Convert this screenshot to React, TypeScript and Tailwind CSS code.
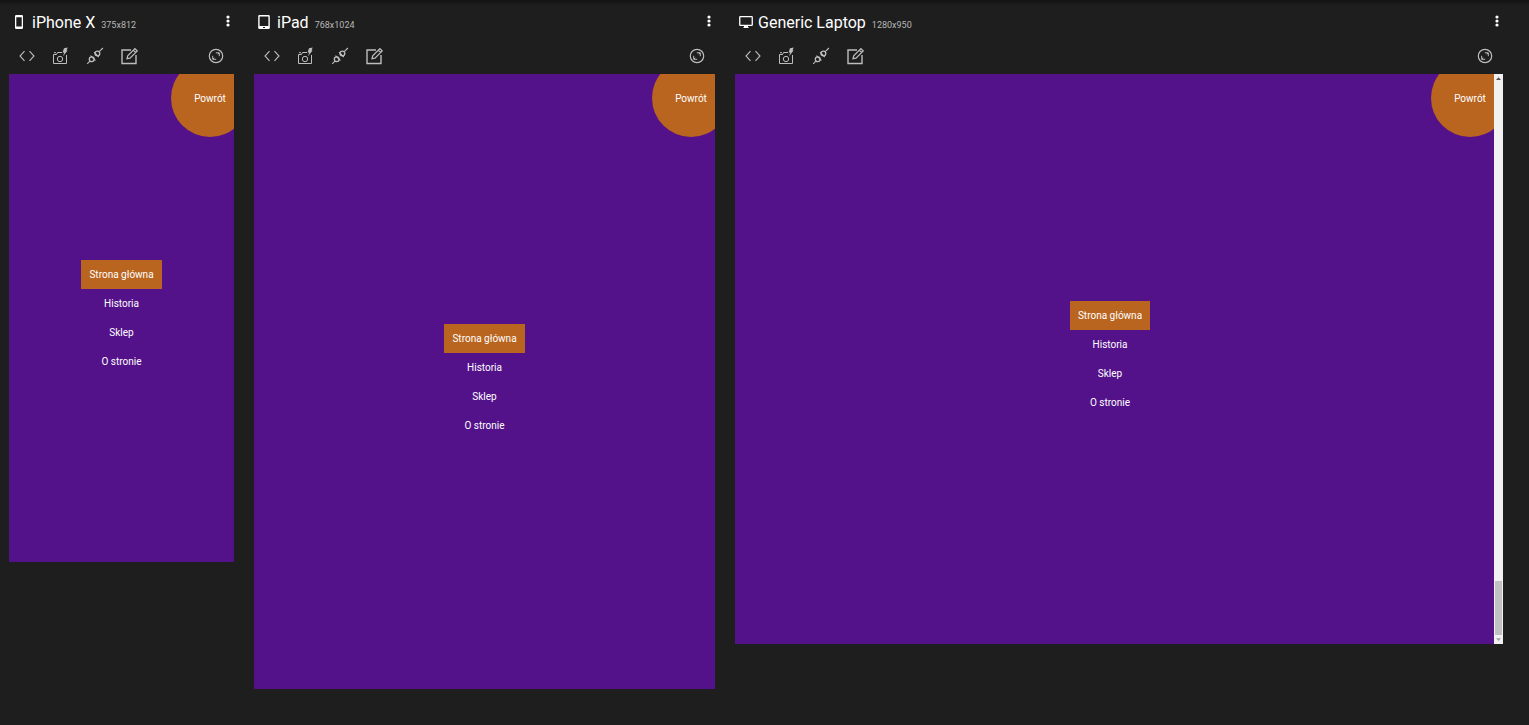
import type { ReactNode } from "react";

type Kind = "phone" | "tablet" | "desktop";

interface Device {
  name: string;
  size: string;
  kind: Kind;
  panel: string;
  screen: string;
  scrollbar?: boolean;
}

const devices: Device[] = [
  { name: "iPhone X", size: "375x812", kind: "phone", panel: "w-[225px]", screen: "aspect-[225/488]" },
  { name: "iPad", size: "768x1024", kind: "tablet", panel: "w-[461px]", screen: "aspect-[461/615]" },
  { name: "Generic Laptop", size: "1280x950", kind: "desktop", panel: "w-[768px]", screen: "aspect-[768/570]", scrollbar: true },
];

const links = ["Strona główna", "Historia", "Sklep", "O stronie"];

function DeviceIcon({ kind }: { kind: Kind }) {
  if (kind === "phone") {
    return (
      <svg className="h-4 w-3" viewBox="0 0 12 16" fill="currentColor" fillRule="evenodd" aria-hidden="true">
        <path d="M3.200 1h5.600q1.200 0 1.200 1.200v11.600q0 1.200-1.200 1.200H3.200Q2 15 2 13.800V2.200Q2 1 3.200 1zM3.300 3.300v9.200h5.400V3.300z" />
      </svg>
    );
  }
  if (kind === "tablet") {
    return (
      <svg className="h-4 w-3" viewBox="0 0 12 16" fill="currentColor" fillRule="evenodd" aria-hidden="true">
        <path d="M1.500 1h9q1.300 0 1.300 1.300v11.400q0 1.300-1.300 1.300h-9Q.2 15 .2 13.700V2.300Q.2 1 1.500 1zM1.600 2.600v9.400h8.800V2.600zM5 13h2v1H5z" />
      </svg>
    );
  }
  return (
    <svg className="h-4 w-3.5" viewBox="0 0 14 16" fill="currentColor" fillRule="evenodd" aria-hidden="true">
      <path d="M1.300 2h11.400q1.200 0 1.200 1.200v7.600q0 1.200-1.200 1.200H9v1l1 1H4l1-1v-1H1.300Q.1 12 .1 10.800V3.200Q.1 2 1.300 2zM1.400 3.300v7.400h11.200V3.300z" />
    </svg>
  );
}

function ToolButton({ label, children }: { label: string; children: ReactNode }) {
  return (
    <button type="button" aria-label={label} className="flex h-6 w-[34px] items-center justify-center text-[#bdbdbd]">
      <svg className="size-[18px]" viewBox="0 0 18 18" fill="none" stroke="currentColor" strokeWidth="1" aria-hidden="true">
        {children}
      </svg>
    </button>
  );
}

function Toolbar() {
  return (
    <div className="flex items-center px-px">
      <ToolButton label="Inspect">
        <path d="M6.500 4.200 2 9l4.500 4.800M11.500 4.200 16 9l-4.500 4.800" strokeWidth="1.100" />
      </ToolButton>
      <ToolButton label="Screenshot">
        <path d="M10 5.500H5.500L4.500 7.500H1.500V16.500H14.500V8" />
        <path d="M2 5.700H4" />
        <circle cx="8" cy="12" r="2.700" />
        <path d="M12 1.200 15.700 .4 14.500 3.600H15.600L11 9.200 12.200 5.500H10.600z" fill="currentColor" stroke="none" />
      </ToolButton>
      <ToolButton label="Connect">
        <circle cx="5.700" cy="12.300" r="2.400" strokeWidth="1.300" />
        <circle cx="11.400" cy="6.500" r="2.400" strokeWidth="1.300" />
        <path d="M1.200 16.800 3.900 14.100M13.200 4.700 16.900 1M4.500 8.600 9.400 13.500M8 5.200 12.800 10" strokeWidth="1.100" />
      </ToolButton>
      <ToolButton label="Edit">
        <path d="M11 3H2V16.500H16V8" strokeWidth="1.400" />
        <path d="M7 11.700 7.700 8.800 14.900 1.600 17.200 3.900 10 11.100zM13.300 3.200 15.600 5.500" strokeWidth="1.200" />
      </ToolButton>
      <div className="ml-auto">
        <ToolButton label="Fullscreen">
          <circle cx="9" cy="9" r="6.700" strokeWidth="1.200" />
          <path d="M8.800 5.800H12.300V9.200M5.700 8.800V12.300H9.200M12 6 10.800 7.200M6 12 7.200 10.800" />
        </ToolButton>
      </div>
    </div>
  );
}

function Scrollbar() {
  return (
    <div className="flex w-[9px] shrink-0 flex-col items-center bg-[#f1f1f1]" aria-hidden="true">
      <svg className="h-[9px] w-[9px]" viewBox="0 0 9 9" fill="#505050">
        <path d="M2 6 4.500 3.200 7 6z" />
      </svg>
      <div className="grow" />
      <div className="h-[54px] w-[7px] bg-[#c1c1c1]" />
      <svg className="h-[9px] w-[9px]" viewBox="0 0 9 9" fill="#a3a3a3">
        <path d="M2 3.200h5L4.500 6z" />
      </svg>
    </div>
  );
}

function Screen({ device }: { device: Device }) {
  return (
    <div className={`flex w-full ${device.screen}`}>
      <div className={`relative flex grow items-center justify-center overflow-hidden bg-[#54128a] text-[10px] text-white ${device.scrollbar ? "pr-[9px]" : ""}`}>
        <button type="button" className="absolute -top-[15px] -right-[15px] size-[78px] rounded-full bg-[#b9651f]">
          Powrót
        </button>
        <nav className="flex flex-col items-center">
          {links.map((link, i) => (
            <a key={link} href="#" className={`flex h-[29px] items-center px-2 ${i === 0 ? "bg-[#b9651f]" : ""}`}>
              {link}
            </a>
          ))}
        </nav>
      </div>
      {device.scrollbar && <Scrollbar />}
    </div>
  );
}

function DevicePanel({ device }: { device: Device }) {
  return (
    <section className={`shrink-0 ${device.panel}`}>
      <header className="flex h-6 items-center pl-1">
        <span className="w-[19px] shrink-0 pb-0.5 text-white">
          <DeviceIcon kind={device.kind} />
        </span>
        <div className="flex items-baseline gap-1.5 whitespace-nowrap">
          <h2 className="text-base leading-6 text-white">{device.name}</h2>
          <span className="text-[9px] text-[#b8b8b8]">{device.size}</span>
        </div>
        <button type="button" aria-label={`${device.name} menu`} className="ml-auto flex w-3 justify-center pb-1 text-white">
          <svg className="h-3 w-1" viewBox="0 0 4 12" fill="currentColor" aria-hidden="true">
            <circle cx="2" cy="2" r="1.600" />
            <circle cx="2" cy="6" r="1.600" />
            <circle cx="2" cy="10" r="1.600" />
          </svg>
        </button>
      </header>
      <div className="pt-[9px] pb-1.5">
        <Toolbar />
      </div>
      <Screen device={device} />
    </section>
  );
}

export default function App() {
  return (
    <main className="min-h-screen overflow-x-auto bg-[#1e1e1e] font-['Roboto',sans-serif]">
      <div className="h-1.5 bg-linear-to-b from-[#131313] to-[#1e1e1e]" />
      <div className="flex items-start gap-5 px-[9px] pt-[5px]">
        {devices.map((device) => (
          <DevicePanel key={device.name} device={device} />
        ))}
      </div>
    </main>
  );
}
